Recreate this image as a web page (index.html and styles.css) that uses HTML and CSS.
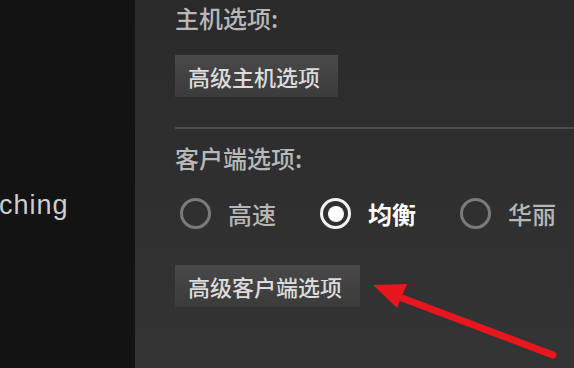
FILE: index.html
```
<!DOCTYPE html>
<html lang="zh-CN">
	<head>
		<title>串流设置</title>
		<meta http-equiv="Content-Type" content="text/html; charset=utf-8">
		<link rel="stylesheet" href="styles.css">
	</head>
	<body>
		<div class="sidebar">
			<span class="title">ching</span>
		</div>
		<div class="panel">
			<div class="label">主机选项:</div>
			<button class="btn">高级主机选项</button>
			<div class="divider"></div>
			<div class="label">客户端选项:</div>
			<div class="radios">
				<label class="radio"><span class="dot"></span><span class="text">高速</span></label>
				<label class="radio checked"><span class="dot"></span><span class="text">均衡</span></label>
				<label class="radio"><span class="dot"></span><span class="text">华丽</span></label>
			</div>
			<button class="btn">高级客户端选项</button>
		</div>
		<svg class="arrow" viewBox="0 0 574 368" width="574" height="368">
			<line x1="394" y1="295" x2="553" y2="355" stroke="#e8161e" stroke-width="7" stroke-linecap="round"/>
			<polygon points="373,285 407,284 397,308" fill="#e8161e"/>
		</svg>
	</body>
</html>
```

FILE: styles.css
```
html, body {
	height: 100%;
}
body {
	margin: 0;
	display: flex;
	overflow: hidden;
	font-family: "Noto Sans CJK SC", "Liberation Sans", sans-serif;
	background: #2e2e2e;
}
.sidebar {
	width: 135px;
	flex: none;
	background-color: #131313;
	padding-top: 190px;
	box-sizing: border-box;
}
.sidebar .title {
	display: block;
	font-family: "Liberation Sans", Arial, sans-serif;
	font-size: 27px;
	line-height: 30px;
	letter-spacing: 1px;
	color: #cdcdcd;
	margin-left: -1px;
}
.panel {
	flex: 1;
	padding: 2px 0 0 40px;
	background: linear-gradient(#2a2a2a, #343434);
}
.label {
	font-size: 24px;
	font-weight: 500;
	line-height: 32px;
	color: #b8b8b8;
}
.btn {
	display: block;
	height: 42px;
	margin: 21px 0 0 0;
	padding: 0 18px 0 13px;
	border: none;
	background: linear-gradient(#494949, #3b3b3b);
	color: #dcdcdc;
	font-family: "Noto Sans CJK SC", sans-serif;
	font-size: 22px;
	font-weight: 500;
	line-height: 42px;
}
.divider {
	height: 2px;
	margin: 30px 0 13px 0;
	background-color: #4b4b4b;
}
.radios {
	display: flex;
	gap: 44px;
	margin: 24px 0 0 5px;
	height: 31px;
}
.radio {
	display: flex;
	align-items: center;
	gap: 17px;
}
.radio .dot {
	width: 31px;
	height: 31px;
	box-sizing: border-box;
	border: 3px solid #7b7b7b;
	border-radius: 50%;
	display: flex;
	align-items: center;
	justify-content: center;
}
.radio .text {
	font-size: 24px;
	font-weight: 500;
	line-height: 31px;
	color: #b6b6b6;
	width: 48px;
}
.radio.checked .dot {
	border-color: #f2f2f2;
}
.radio.checked .dot::after {
	content: "";
	width: 16px;
	height: 16px;
	border-radius: 50%;
	background-color: #fff;
}
.radio.checked .text {
	color: #fff;
	font-weight: bold;
}
.panel .btn:last-child {
	margin-top: 36px;
}
.arrow {
	position: absolute;
	top: 0;
	left: 0;
}
```
